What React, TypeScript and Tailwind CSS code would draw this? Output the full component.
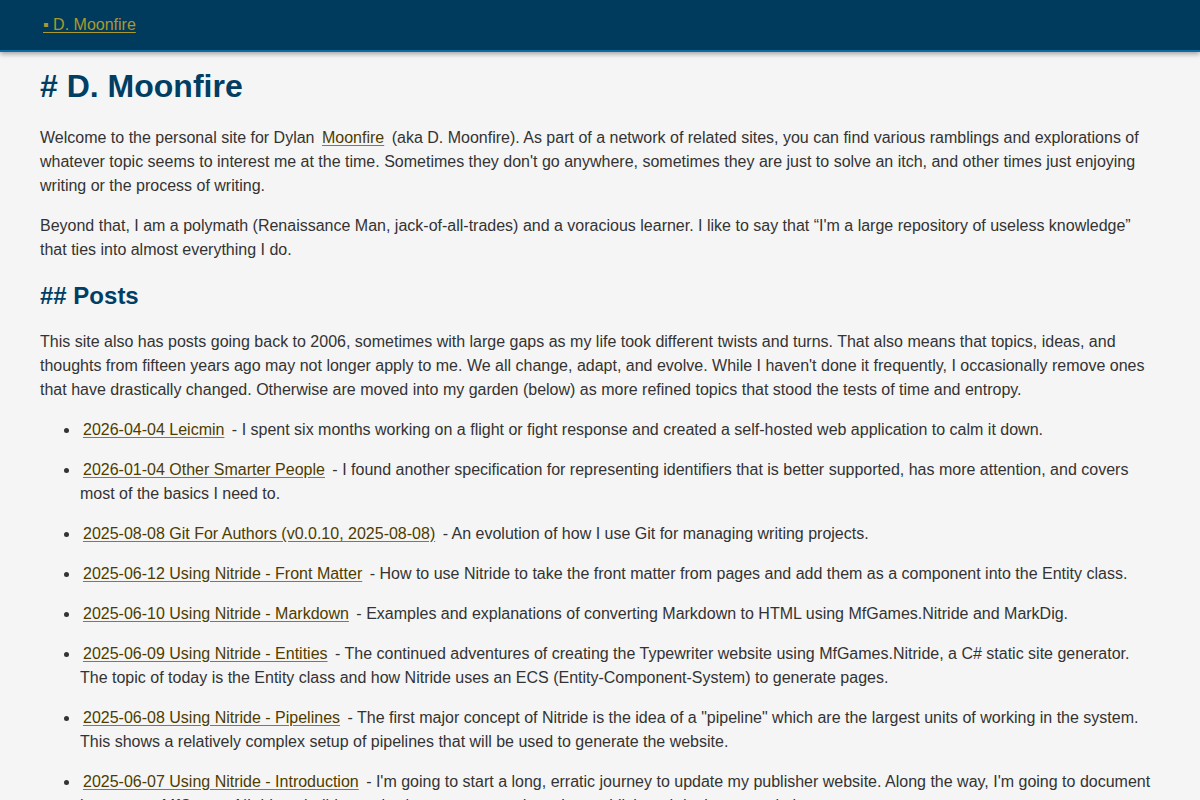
const posts = [
  {
    title: "2026-04-04 Leicmin",
    summary:
      "I spent six months working on a flight or fight response and created a self-hosted web application to calm it down.",
  },
  {
    title: "2026-01-04 Other Smarter People",
    summary:
      "I found another specification for representing identifiers that is better supported, has more attention, and covers most of the basics I need to.",
  },
  {
    title: "2025-08-08 Git For Authors (v0.0.10, 2025-08-08)",
    summary: "An evolution of how I use Git for managing writing projects.",
  },
  {
    title: "2025-06-12 Using Nitride - Front Matter",
    summary:
      "How to use Nitride to take the front matter from pages and add them as a component into the Entity class.",
  },
  {
    title: "2025-06-10 Using Nitride - Markdown",
    summary:
      "Examples and explanations of converting Markdown to HTML using MfGames.Nitride and MarkDig.",
  },
  {
    title: "2025-06-09 Using Nitride - Entities",
    summary:
      "The continued adventures of creating the Typewriter website using MfGames.Nitride, a C# static site generator. The topic of today is the Entity class and how Nitride uses an ECS (Entity-Component-System) to generate pages.",
  },
  {
    title: "2025-06-08 Using Nitride - Pipelines",
    summary:
      'The first major concept of Nitride is the idea of a "pipeline" which are the largest units of working in the system. This shows a relatively complex setup of pipelines that will be used to generate the website.',
  },
  {
    title: "2025-06-07 Using Nitride - Introduction",
    summary:
      "I'm going to start a long, erratic journey to update my publisher website. Along the way, I'm going to document how to use MfGames.Nitride to build a static site generator and use it to publish and deploy my websites.",
  },
];

function Link({ children }: { children: React.ReactNode }) {
  return (
    <a
      href="#"
      className="px-[3px] text-[#4d3c00] underline decoration-[#9a7a10] underline-offset-2"
    >
      {children}
    </a>
  );
}

export default function App() {
  return (
    <div className="min-h-screen bg-[#f5f5f5] font-['Liberation_Sans',Arial,sans-serif] text-[16px] leading-6 text-[#333333]">
      <header className="relative h-[52px] border-b-2 border-[#0b6aa2] bg-[#003b5e] px-[43px] shadow-[0_2px_5px_rgba(0,0,0,0.35)]">
        <a
          href="#"
          className="inline-block pt-[13px] text-[#ad982c] underline underline-offset-2"
        >
          ▪ D. Moonfire
        </a>
      </header>

      <main className="px-10">
        <h1 className="mt-[15px] text-[32px] font-bold leading-[38px] text-[#003e63]">
          # D. Moonfire
        </h1>

        <p className="mt-[21px]">
          Welcome to the personal site for Dylan <Link>Moonfire</Link> (aka D.
          Moonfire). As part of a network of related sites, you can find various
          ramblings and explorations of whatever topic seems to interest me at
          the time. Sometimes they don't go anywhere, sometimes they are just to
          solve an itch, and other times just enjoying writing or the process of
          writing.
        </p>
        <p className="mt-4">
          Beyond that, I am a polymath (Renaissance Man, jack-of-all-trades) and
          a voracious learner. I like to say that “I'm a large repository of
          useless knowledge” that ties into almost everything I do.
        </p>

        <h2 className="mt-[19px] text-[24px] font-bold leading-[30px] text-[#003e63]">
          ## Posts
        </h2>

        <p className="mt-[19px]">
          This site also has posts going back to 2006, sometimes with large gaps
          as my life took different twists and turns. That also means that
          topics, ideas, and thoughts from fifteen years ago may not longer apply
          to me. We all change, adapt, and evolve. While I haven't done it
          frequently, I occasionally remove ones that have drastically changed.
          Otherwise are moved into my garden (below) as more refined topics that
          stood the tests of time and entropy.
        </p>

        <ul className="mt-4 list-disc pl-10 pb-8">
          {posts.map((post) => (
            <li key={post.title} className="mb-4">
              <Link>{post.title}</Link> - {post.summary}
            </li>
          ))}
        </ul>
      </main>
    </div>
  );
}
